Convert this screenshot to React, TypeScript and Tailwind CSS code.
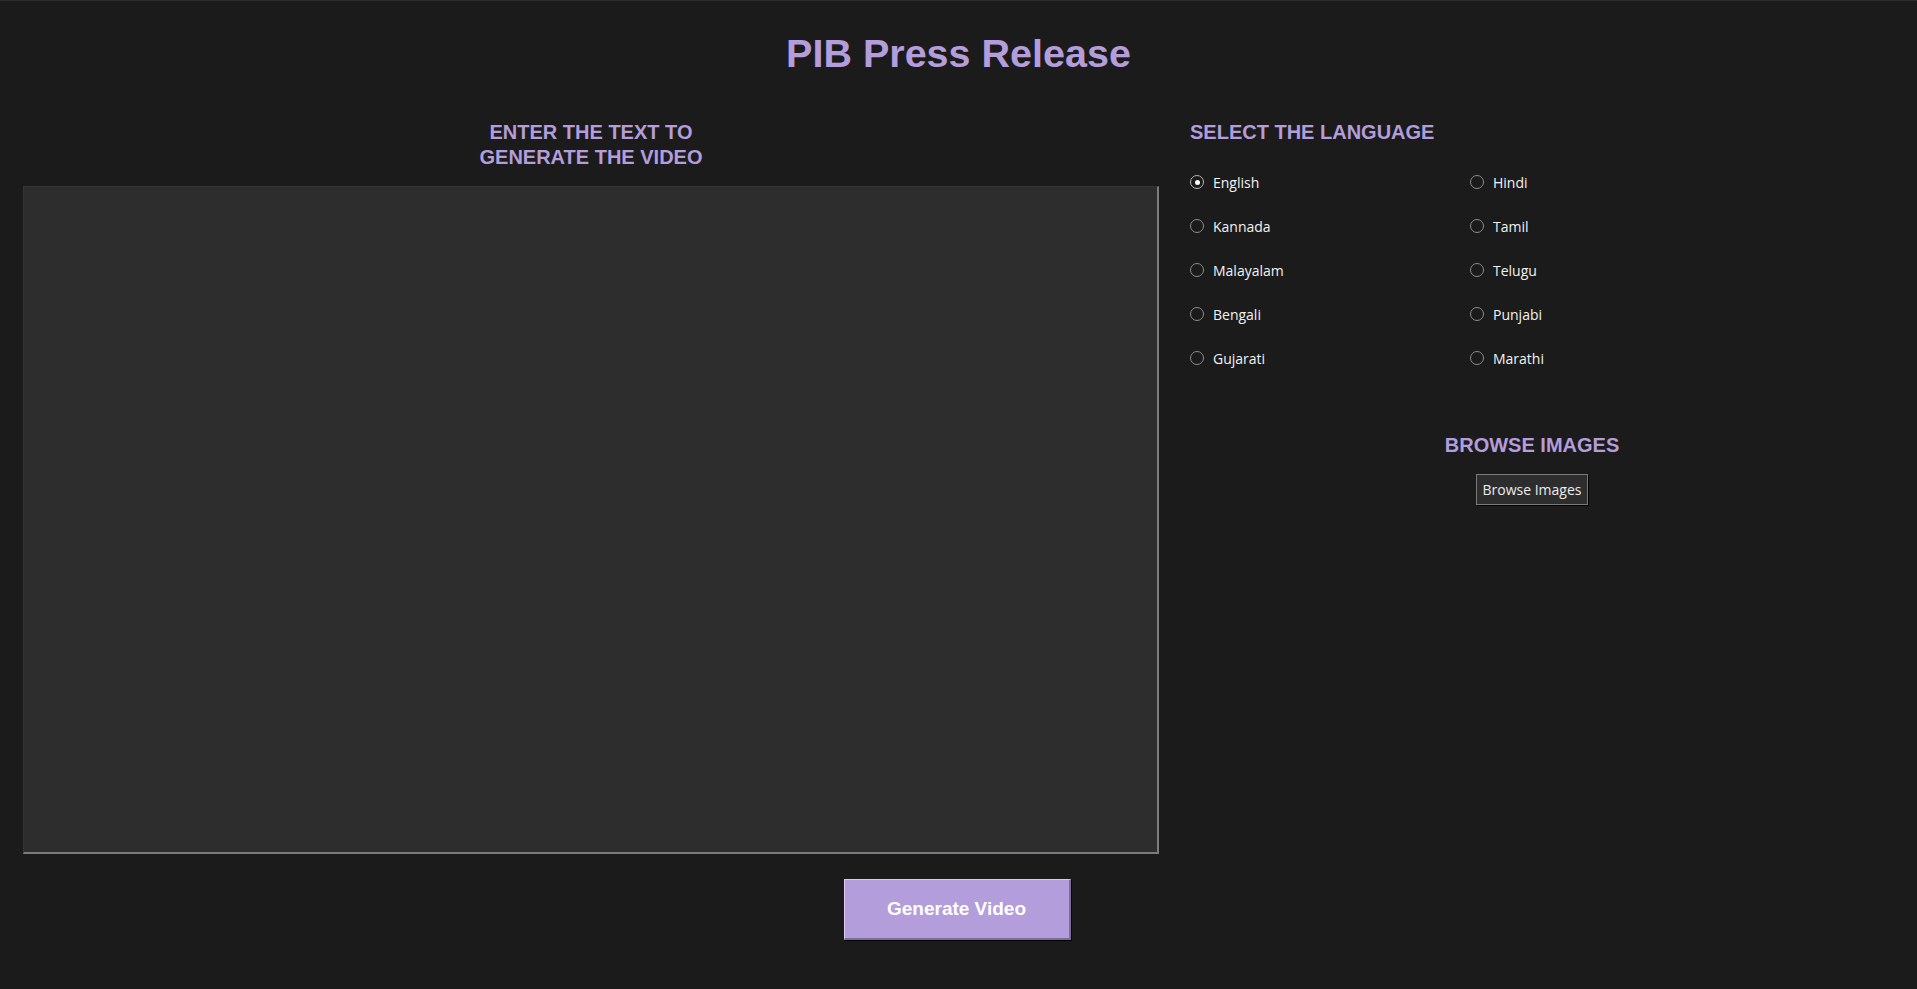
import { useState } from "react";

const languages = [
  "English",
  "Hindi",
  "Kannada",
  "Tamil",
  "Malayalam",
  "Telugu",
  "Bengali",
  "Punjabi",
  "Gujarati",
  "Marathi",
];

function Radio({ label, checked, onSelect }: { label: string; checked: boolean; onSelect: () => void }) {
  return (
    <label className="flex h-[44px] cursor-pointer items-center gap-[9px]" onClick={onSelect}>
      <span
        className={
          checked
            ? "flex h-[14px] w-[14px] items-center justify-center rounded-full border border-[#b5b5b5] bg-[#1b1b1b]"
            : "flex h-[14px] w-[14px] items-center justify-center rounded-full border border-[#8c8c8c] bg-[#1b1b1b]"
        }
      >
        {checked && <span className="h-[5px] w-[5px] rounded-full bg-white" />}
      </span>
      <span className="font-['Open_Sans',sans-serif] text-[14px] text-[#f2f2f2]">{label}</span>
    </label>
  );
}

export default function App() {
  const [lang, setLang] = useState("English");

  return (
    <div className="min-h-screen w-full border-t border-[#2b2b2b] bg-[#1b1b1b] font-['Liberation_Sans',Arial,sans-serif]">
      <h1 className="pt-[32px] text-center text-[39.5px] leading-[40px] font-bold text-[#b39ddb]">
        PIB Press Release
      </h1>

      <div className="mt-[47px] flex">
        <div className="ml-[23px] flex w-[1136px] flex-col">
          <h2 className="text-center text-[20px] leading-[25px] font-bold text-[#b39ddb]">
            ENTER THE TEXT TO
            <br />
            GENERATE THE VIDEO
          </h2>
          <textarea
            className="mt-[16px] h-[668px] w-full resize-none border-t border-l border-r-2 border-b-2 border-t-[#343434] border-l-[#343434] border-r-[#7b7b7b] border-b-[#7b7b7b] bg-[#2d2d2d] p-2 text-[14px] text-white outline-none"
            spellCheck={false}
          />
        </div>

        <div className="ml-[31px] flex w-[684px] flex-col">
          <h2 className="text-[20px] leading-[25px] font-bold text-[#b39ddb]">SELECT THE LANGUAGE</h2>
          <div className="mt-[15px] grid grid-cols-[280px_1fr]">
            {languages.map((l) => (
              <Radio key={l} label={l} checked={lang === l} onSelect={() => setLang(l)} />
            ))}
          </div>

          <div className="mt-[53px] flex flex-col items-center">
            <h2 className="text-[20px] leading-[25px] font-bold text-[#b39ddb]">BROWSE IMAGES</h2>
            <button className="mt-[16px] h-[31px] w-[112px] border border-[#7a7a7a] bg-[#2d2d2d] font-['Open_Sans',sans-serif] text-[14px] text-[#ececec] shadow-[1px_1px_0_#000]">
              Browse Images
            </button>
          </div>
        </div>
      </div>

      <div className="mt-[25px] flex justify-center">
        <button className="mr-[3px] h-[61px] w-[227px] border-t border-l border-r-2 border-b-2 border-t-[#d8cbef] border-l-[#d8cbef] border-r-[#7d6b9c] border-b-[#7d6b9c] bg-[#b39ddb] text-[19px] font-bold text-white shadow-[1px_1px_0_#000]">
          Generate Video
        </button>
      </div>
    </div>
  );
}
